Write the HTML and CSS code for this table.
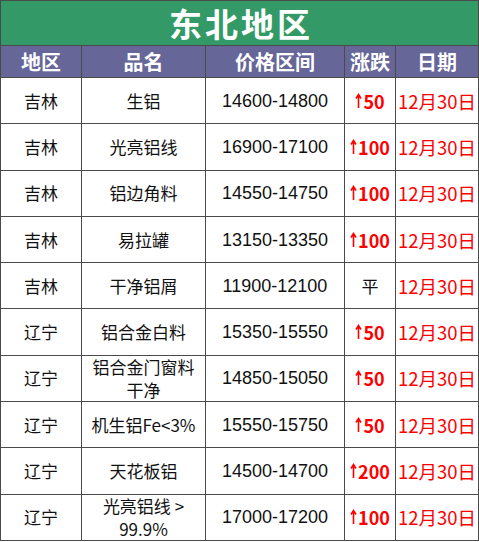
FILE: index.html
```html
<!DOCTYPE html>
<html lang="zh">
<head>
<meta charset="utf-8">
<link rel="stylesheet" href="styles.css">
</head>
<body>
<div class="table">
  <div class="title">东北地区</div>
  <div class="th">地区</div>
  <div class="th">品名</div>
  <div class="th">价格区间</div>
  <div class="th">涨跌</div>
  <div class="th">日期</div>

  <div class="td">吉林</div><div class="td">生铝</div><div class="td num">14600-14800</div><div class="td up"><svg class="arrow" viewBox="0 0 7 15"><path d="M3.5 15V2M1 5.5L3.5 1.5L6 5.5"/></svg>50</div><div class="td date">12月30日</div>
  <div class="td">吉林</div><div class="td">光亮铝线</div><div class="td num">16900-17100</div><div class="td up"><svg class="arrow" viewBox="0 0 7 15"><path d="M3.5 15V2M1 5.5L3.5 1.5L6 5.5"/></svg>100</div><div class="td date">12月30日</div>
  <div class="td">吉林</div><div class="td">铝边角料</div><div class="td num">14550-14750</div><div class="td up"><svg class="arrow" viewBox="0 0 7 15"><path d="M3.5 15V2M1 5.5L3.5 1.5L6 5.5"/></svg>100</div><div class="td date">12月30日</div>
  <div class="td">吉林</div><div class="td">易拉罐</div><div class="td num">13150-13350</div><div class="td up"><svg class="arrow" viewBox="0 0 7 15"><path d="M3.5 15V2M1 5.5L3.5 1.5L6 5.5"/></svg>100</div><div class="td date">12月30日</div>
  <div class="td">吉林</div><div class="td">干净铝屑</div><div class="td num">11900-12100</div><div class="td flat">平</div><div class="td date">12月30日</div>
  <div class="td">辽宁</div><div class="td">铝合金白料</div><div class="td num">15350-15550</div><div class="td up"><svg class="arrow" viewBox="0 0 7 15"><path d="M3.5 15V2M1 5.5L3.5 1.5L6 5.5"/></svg>50</div><div class="td date">12月30日</div>
  <div class="td">辽宁</div><div class="td two">铝合金门窗料<br>干净</div><div class="td num">14850-15050</div><div class="td up"><svg class="arrow" viewBox="0 0 7 15"><path d="M3.5 15V2M1 5.5L3.5 1.5L6 5.5"/></svg>50</div><div class="td date">12月30日</div>
  <div class="td">辽宁</div><div class="td">机生铝Fe&lt;3%</div><div class="td num">15550-15750</div><div class="td up"><svg class="arrow" viewBox="0 0 7 15"><path d="M3.5 15V2M1 5.5L3.5 1.5L6 5.5"/></svg>50</div><div class="td date">12月30日</div>
  <div class="td">辽宁</div><div class="td">天花板铝</div><div class="td num">14500-14700</div><div class="td up"><svg class="arrow" viewBox="0 0 7 15"><path d="M3.5 15V2M1 5.5L3.5 1.5L6 5.5"/></svg>200</div><div class="td date">12月30日</div>
  <div class="td">辽宁</div><div class="td two">光亮铝线 &gt;<br>99.9%</div><div class="td num">17000-17200</div><div class="td up"><svg class="arrow" viewBox="0 0 7 15"><path d="M3.5 15V2M1 5.5L3.5 1.5L6 5.5"/></svg>100</div><div class="td date">12月30日</div>
</div>
</body>
</html>
```
FILE: styles.css
```css
html, body {
  margin: 0;
  padding: 0;
  background: #ffffff;
}
body {
  font-family: "Noto Sans CJK SC", "Liberation Sans", sans-serif;
  color: #111;
}
.table {
  width: 479px;
  box-sizing: border-box;
  display: grid;
  grid-template-columns: 80px 123px 138px 50px 82px;
  grid-template-rows: 44px 31px repeat(10, 45.3px);
  gap: 1px;
  background: #4a4a4a;
  border: 1px solid #4a4a4a;
}
.title {
  grid-column: 1 / -1;
  background: #339966;
  color: #fff;
  font-weight: 700;
  font-size: 33px;
  line-height: 1;
  display: flex;
  align-items: center;
  justify-content: center;
  letter-spacing: 3px;
  padding-left: 3px;
}
.th {
  background: #666699;
  color: #fff;
  font-weight: 700;
  font-size: 20px;
  line-height: 1;
  display: flex;
  align-items: center;
  justify-content: center;
}
.td {
  background: #fff;
  font-size: 17px;
  display: flex;
  align-items: center;
  justify-content: center;
  text-align: center;
  line-height: 22px;
  white-space: nowrap;
}
.two {
  line-height: 23px;
}
.num {
  font-family: "Liberation Sans", "Noto Sans CJK SC", sans-serif;
  font-size: 18px;
}
.up {
  color: #ff0000;
  font-weight: 700;
  font-size: 18px;
}
.arrow {
  width: 7px;
  height: 15px;
  margin-right: 1px;
  margin-bottom: 1px;
  fill: none;
  stroke: #ff0000;
  stroke-width: 1.6;
}
.date {
  color: #ff0000;
  font-size: 18.5px;
}
.flat {
  font-size: 17px;
}
```
